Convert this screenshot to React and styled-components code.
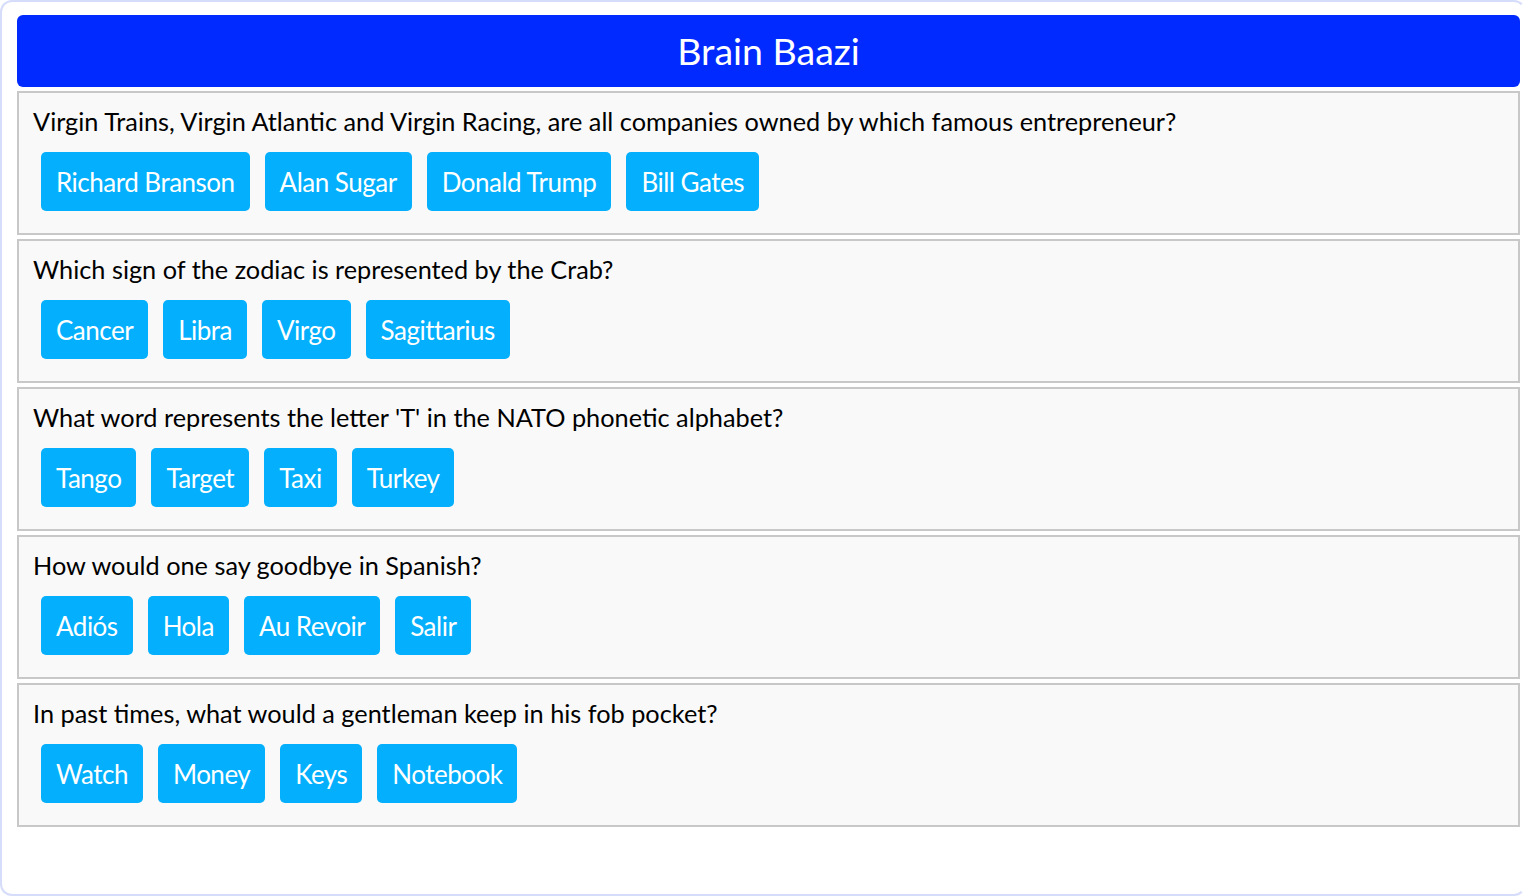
import React from "react";
import styled, { createGlobalStyle } from "styled-components";

const GlobalStyle = createGlobalStyle`
  body {
    margin: 0;
    font-family: Lato, "Liberation Sans", sans-serif;
    background: #ffffff;
  }
  * {
    box-sizing: border-box;
  }
`;

const quiz = [
  {
    question:
      "Virgin Trains, Virgin Atlantic and Virgin Racing, are all companies owned by which famous entrepreneur?",
    answers: ["Richard Branson", "Alan Sugar", "Donald Trump", "Bill Gates"],
  },
  {
    question: "Which sign of the zodiac is represented by the Crab?",
    answers: ["Cancer", "Libra", "Virgo", "Sagittarius"],
  },
  {
    question: "What word represents the letter 'T' in the NATO phonetic alphabet?",
    answers: ["Tango", "Target", "Taxi", "Turkey"],
  },
  {
    question: "How would one say goodbye in Spanish?",
    answers: ["Adiós", "Hola", "Au Revoir", "Salir"],
  },
  {
    question: "In past times, what would a gentleman keep in his fob pocket?",
    answers: ["Watch", "Money", "Keys", "Notebook"],
  },
];

export default function App() {
  return (
    <React.Fragment>
      <GlobalStyle />
      <Frame>
        <Header>Brain Baazi</Header>
        <QuestionList>
          {quiz.map((item) => (
            <Card key={item.question}>
              <Question>{item.question}</Question>
              <Answers>
                {item.answers.map((answer) => (
                  <AnswerButton key={answer} type="button">
                    {answer}
                  </AnswerButton>
                ))}
              </Answers>
            </Card>
          ))}
        </QuestionList>
      </Frame>
    </React.Fragment>
  );
}

const Frame = styled.div`
  min-height: 896px;
  border: 2px solid #d6ddfb;
  border-right-color: transparent;
  border-radius: 12px;
  padding: 13px 4px 0 15px;
`;

const Header = styled.h1`
  margin: 0;
  height: 72px;
  display: flex;
  align-items: center;
  justify-content: center;
  background: #002aff;
  color: #ffffff;
  border-radius: 6px;
  font-size: 37.5px;
  font-weight: 400;
  padding-bottom: 2px;
`;

const QuestionList = styled.div`
  display: flex;
  flex-direction: column;
  gap: 4px;
  margin-top: 4px;
`;

const Card = styled.div`
  height: 144px;
  background: #f9f9f9;
  border: 2px solid #c8c8c8;
  padding: 13px 14px 0;
`;

const Question = styled.p`
  margin: 0;
  font-size: 25.3px;
  line-height: 31px;
  color: #000000;
`;

const Answers = styled.div`
  display: flex;
  gap: 15px;
  margin: 15px 0 0 8px;
`;

const AnswerButton = styled.button`
  height: 59px;
  padding: 0 15px;
  border: none;
  border-radius: 5px;
  background: #04b0fd;
  color: #ffffff;
  font-family: Lato, "Liberation Sans", sans-serif;
  font-size: 26px;
  letter-spacing: -0.5px;
  cursor: pointer;
`;
